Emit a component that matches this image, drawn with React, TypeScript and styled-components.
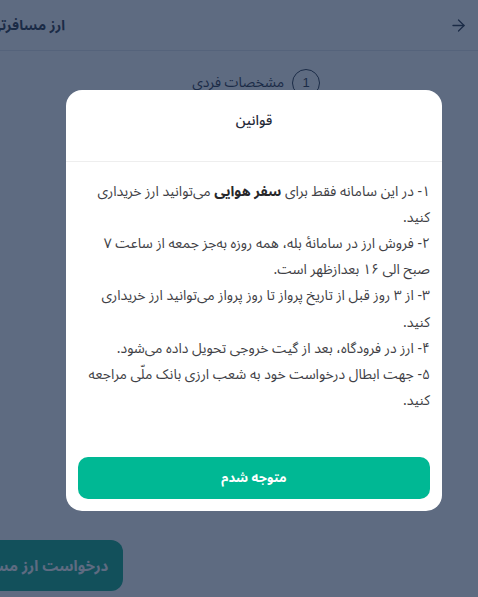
import styled, { createGlobalStyle } from "styled-components";
import { ArrowRight } from "lucide-react";

const GlobalStyle = createGlobalStyle`
  html, body {
    margin: 0;
    padding: 0;
    overflow: hidden;
  }
  body {
    font-family: "Noto Sans Arabic", "DejaVu Sans", sans-serif;
  }
`;

const Screen = styled.div`
  position: relative;
  width: 478px;
  height: 597px;
  overflow: hidden;
  direction: rtl;
  background: #ffffff;
`;

const Page = styled.div`
  width: 551px;
  height: 100%;
  display: flex;
  flex-direction: column;
`;

const Header = styled.header`
  height: 50px;
  flex-shrink: 0;
  display: flex;
  align-items: center;
  justify-content: space-between;
  padding: 0 10px 0 63px;
  border-bottom: 1px solid #e1e5ea;
  color: #1e293b;
`;

const PageTitle = styled.h1`
  margin: 0;
  font-size: 14px;
  font-weight: 700;
`;

const Stepper = styled.div`
  display: flex;
  align-items: center;
  gap: 8px;
  padding: 17px 158px 0 0;
  color: #1e293b;
`;

const StepNumber = styled.span`
  width: 26px;
  height: 26px;
  border: 1.5px solid #1e293b;
  border-radius: 50%;
  display: flex;
  align-items: center;
  justify-content: center;
  font-family: "Liberation Sans", sans-serif;
  font-size: 13px;
`;

const StepLabel = styled.span`
  font-size: 14px;
`;

const Footer = styled.div`
  margin-top: auto;
  display: flex;
  padding: 0 16px 6px;
`;

const RequestButton = styled.button`
  margin-right: auto;
  height: 51px;
  padding: 0 15px;
  border: none;
  border-radius: 12px;
  background: #00a480;
  color: #ffffff;
  font-family: inherit;
  font-size: 15px;
  font-weight: 700;
`;

const Overlay = styled.div`
  position: absolute;
  inset: 0;
  background: rgba(26, 44, 76, 0.7);
  display: flex;
  align-items: center;
  justify-content: center;
  padding: 4px 36px 0 66px;
`;

const Modal = styled.div`
  width: 100%;
  background: #ffffff;
  border-radius: 16px;
  display: flex;
  flex-direction: column;
`;

const ModalHeader = styled.div`
  height: 72px;
  box-sizing: border-box;
  padding-top: 16px;
  text-align: center;
  border-bottom: 1px solid #eeeeee;
`;

const ModalTitle = styled.h2`
  margin: 0;
  font-size: 14px;
  font-weight: 500;
  color: #1f2937;
`;

const ModalBody = styled.div`
  padding: 17px 12px 0;
  color: #3f3f46;
  font-size: 14px;
  line-height: 26.2px;
`;

const Rule = styled.p`
  margin: 0;
`;

const Strong = styled.b`
  font-weight: 700;
  color: #27272a;
`;

const ModalFooter = styled.div`
  padding: 43px 12px 12px;
`;

const ConfirmButton = styled.button`
  width: 100%;
  height: 42px;
  border: none;
  border-radius: 10px;
  background: #00b894;
  color: #ffffff;
  font-family: inherit;
  font-size: 13px;
  font-weight: 700;
`;

const rules = [
  "۲- فروش ارز در سامانهٔ بله، همه روزه به‌جز جمعه از ساعت ۷ صبح الی ۱۶ بعدازظهر است.",
  "۳- از ۳ روز قبل از تاریخ پرواز تا روز پرواز می‌توانید ارز خریداری کنید.",
  "۴- ارز در فرودگاه، بعد از گیت خروجی تحویل داده می‌شود.",
  "۵- جهت ابطال درخواست خود به شعب ارزی بانک ملّی مراجعه کنید.",
];

const App = () => {
  return (
    <>
      <GlobalStyle />
      <Screen>
        <Page>
          <Header>
            <ArrowRight size={19} strokeWidth={1.6} />
            <PageTitle>ارز مسافرتی</PageTitle>
          </Header>
          <Stepper>
            <StepNumber>1</StepNumber>
            <StepLabel>مشخصات فردی</StepLabel>
          </Stepper>
          <Footer>
            <RequestButton>درخواست ارز مسافرتی</RequestButton>
          </Footer>
        </Page>
        <Overlay>
          <Modal>
            <ModalHeader>
              <ModalTitle>قوانین</ModalTitle>
            </ModalHeader>
            <ModalBody>
              <Rule>
                ۱- در این سامانه فقط برای <Strong>سفر هوایی</Strong> می‌توانید ارز خریداری کنید.
              </Rule>
              {rules.map((rule) => (
                <Rule key={rule}>{rule}</Rule>
              ))}
            </ModalBody>
            <ModalFooter>
              <ConfirmButton>متوجه شدم</ConfirmButton>
            </ModalFooter>
          </Modal>
        </Overlay>
      </Screen>
    </>
  );
};

export default App;
